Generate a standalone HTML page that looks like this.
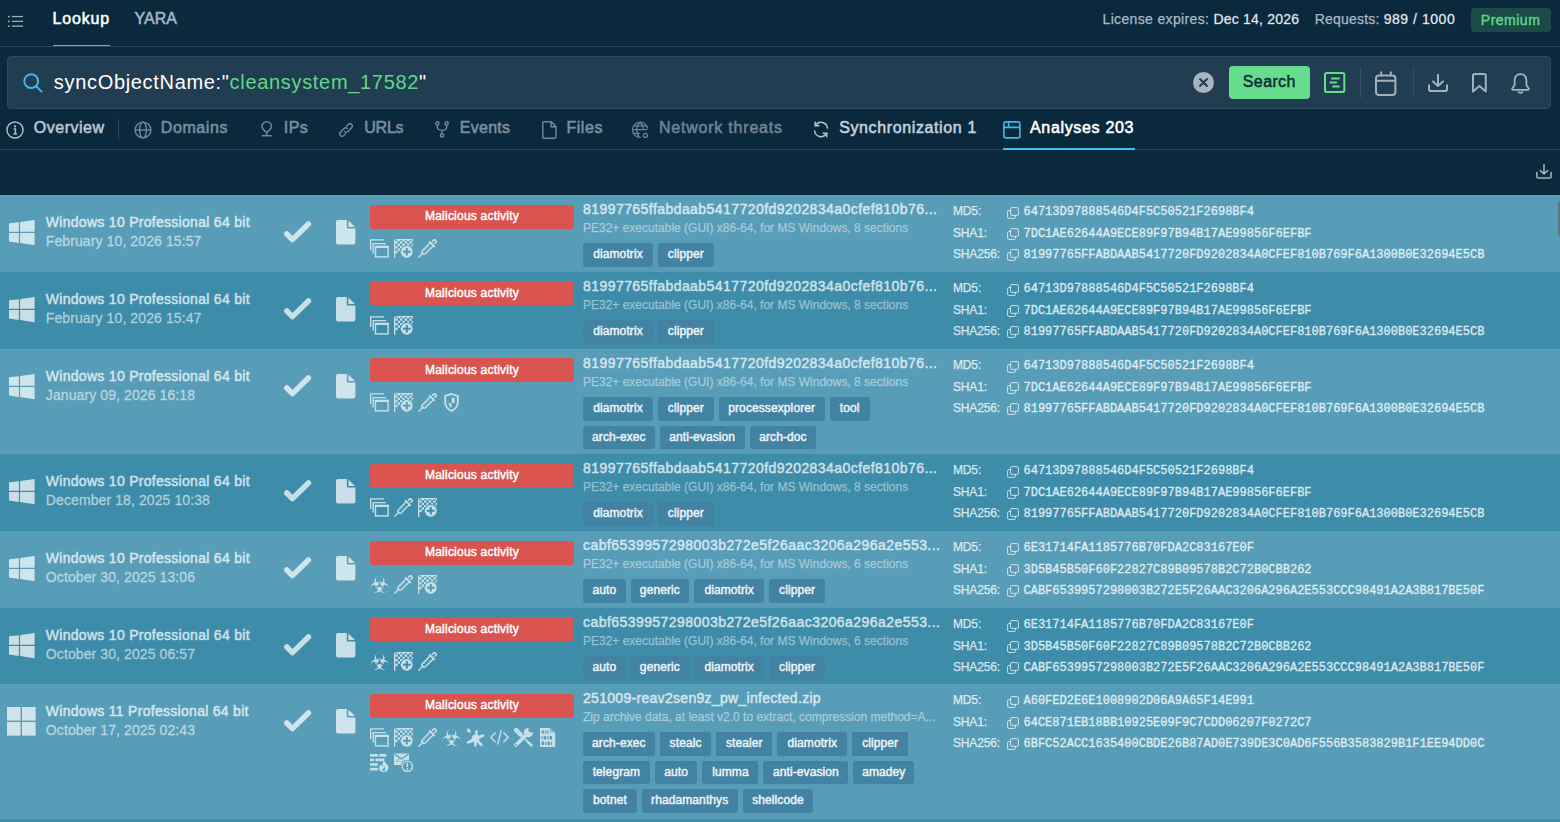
<!DOCTYPE html><html><head><meta charset="utf-8"><style>

*{margin:0;padding:0;box-sizing:border-box}
html,body{width:1560px;height:822px;overflow:hidden;background:#0b293d;font-family:"Liberation Sans",sans-serif}
.abs{position:absolute;display:block}
.t{position:absolute;white-space:nowrap;line-height:1}
.row{position:absolute;left:0;width:1560px}
.rc{position:absolute;left:0;width:1560px;height:0}
.os{position:absolute;left:45.8px;top:19.3px;font-size:14px;line-height:16px;color:var(--c75);-webkit-text-stroke:0.5px var(--c75);white-space:nowrap;letter-spacing:0.29px}
.dt{position:absolute;left:45.8px;top:38.2px;font-size:14px;line-height:16px;color:var(--c55);-webkit-text-stroke:0.3px var(--c55);white-space:nowrap;letter-spacing:0.1px}
.badge{position:absolute;left:370px;top:10.3px;width:204px;height:24px;background:#d9534f;border-radius:3px;color:#fff;-webkit-text-stroke:0.45px #fff;font-size:12px;line-height:23px;text-align:center;letter-spacing:0.22px}
.ic{color:#d2e6ed;opacity:.92}
.nm{position:absolute;left:583px;top:6.4px;font-size:14px;line-height:16px;color:var(--c75);-webkit-text-stroke:0.5px var(--c75);white-space:nowrap;letter-spacing:0.44px}
.ds{position:absolute;left:583px;top:25.8px;font-size:12px;line-height:14px;color:var(--c50);-webkit-text-stroke:0.25px var(--c50);white-space:nowrap}
.tags{position:absolute;left:583px;height:23.5px;display:flex;gap:5px}
.tag{display:block;height:23.5px;background:#4282a3;border-radius:3px;color:#eef4f7;font-weight:normal;-webkit-text-stroke:0.45px #eef4f7;font-size:12px;line-height:23.5px;text-align:center;white-space:nowrap;letter-spacing:0.1px}
.hl{position:absolute;left:953px;font-size:12px;line-height:14px;letter-spacing:-0.15px;color:var(--c80);-webkit-text-stroke:0.25px var(--c80);white-space:nowrap}
.hv{position:absolute;left:1023.5px;font-family:"Liberation Mono",monospace;font-size:12px;line-height:14px;color:var(--c78);white-space:nowrap;-webkit-text-stroke:0.35px var(--c78)}
.cp{color:rgba(255,255,255,.72)}

</style></head><body>
<svg width="0" height="0" style="position:absolute">
<symbol id="i-stack" viewBox="0 0 19 19">
 <path d="M0.6 11V0.9H14" fill="none" stroke="currentColor" stroke-width="1.4"/>
 <path d="M3.2 14.6V4.6H16" fill="none" stroke="currentColor" stroke-width="1.4"/>
 <rect x="5.5" y="7.6" width="12.6" height="10.3" fill="none" stroke="currentColor" stroke-width="1.4"/>
 <rect x="4.8" y="6.8" width="14" height="2.2" fill="currentColor"/>
</symbol>
<symbol id="i-flag" viewBox="0 0 19 19">
 <rect x="0" y="0.5" width="1.3" height="18.5" fill="currentColor"/>
 <path d="M1.3 1.6a1.6 1.6 0 0 1 1.6-1.6H17a1.6 1.6 0 0 1 1.6 1.6V1.2H1.3Z" fill="currentColor"/>
 <g fill="currentColor"><rect x="3.65" y="0.00" width="2.35" height="2.35"/><rect x="8.35" y="0.00" width="2.35" height="2.35"/><rect x="13.05" y="0.00" width="2.35" height="2.35"/><rect x="17.75" y="0.00" width="2.35" height="2.35"/><rect x="1.30" y="2.35" width="2.35" height="2.35"/><rect x="6.00" y="2.35" width="2.35" height="2.35"/><rect x="10.70" y="2.35" width="2.35" height="2.35"/><rect x="15.40" y="2.35" width="2.35" height="2.35"/><rect x="3.65" y="4.70" width="2.35" height="2.35"/><rect x="8.35" y="4.70" width="2.35" height="2.35"/><rect x="13.05" y="4.70" width="2.35" height="2.35"/><rect x="17.75" y="4.70" width="2.35" height="2.35"/><rect x="1.30" y="7.05" width="2.35" height="2.35"/><rect x="6.00" y="7.05" width="2.35" height="2.35"/><rect x="10.70" y="7.05" width="2.35" height="2.35"/><rect x="15.40" y="7.05" width="2.35" height="2.35"/><rect x="3.65" y="9.40" width="2.35" height="2.35"/><rect x="8.35" y="9.40" width="2.35" height="2.35"/><rect x="13.05" y="9.40" width="2.35" height="2.35"/><rect x="17.75" y="9.40" width="2.35" height="2.35"/><rect x="1.30" y="11.75" width="2.35" height="2.35"/><rect x="6.00" y="11.75" width="2.35" height="2.35"/><rect x="10.70" y="11.75" width="2.35" height="2.35"/><rect x="15.40" y="11.75" width="2.35" height="2.35"/></g>
 <circle cx="12.8" cy="12.8" r="6.6" style="fill:var(--rb)"/>
 <circle cx="12.8" cy="12.8" r="5.9" fill="currentColor"/>
 <path d="M12.8 9V16.6M9 12.8H16.6" style="stroke:var(--rb)" stroke-width="2"/>
</symbol>
<symbol id="i-syringe" viewBox="0 0 19 19">
 <path d="M0.8 18.2L5 14" stroke="currentColor" stroke-width="1.3" fill="none" stroke-linecap="round"/>
 <path d="M4.6 11.4L12.6 3.4L15.6 6.4L7.6 14.4Q6 16 4.6 14.6Q3 13 4.6 11.4Z" fill="none" stroke="currentColor" stroke-width="1.4"/>
 <path d="M11 2.2L16.8 8" stroke="currentColor" stroke-width="1.6"/>
 <path d="M14 2.6L16.4 0.4L18.6 2.6L16.4 4.8" fill="none" stroke="currentColor" stroke-width="1.5"/>
 <path d="M6.5 11.2l1 1M8.3 9.4l1 1M10.1 7.6l1 1" stroke="currentColor" stroke-width="1"/>
</symbol>
<symbol id="i-shield" viewBox="0 0 19 19">
 <path d="M9.5 1L15.8 3V9.5Q15.6 15 9.5 18Q3.4 15 3.2 9.5V3Z" fill="none" stroke="currentColor" stroke-width="1.8"/>
 <path d="M9.8 4.8H12.6V10H9.8Z M6.4 10H9.4V15.2Q7 13.2 6.4 10Z" fill="currentColor"/>
</symbol>
<symbol id="i-bio" viewBox="0 0 19 19">
 <mask id="bmask" maskUnits="userSpaceOnUse" x="0" y="0" width="19" height="19"><rect width="19" height="19" fill="white"/><circle cx="9.50" cy="4.70" r="3.75" fill="black"/><circle cx="14.61" cy="13.55" r="3.75" fill="black"/><circle cx="4.39" cy="13.55" r="3.75" fill="black"/><path d="M9.50 10.60L9.50 -1.40" stroke="black" stroke-width="0.7"/><path d="M9.50 10.60L19.89 16.60" stroke="black" stroke-width="0.7"/><path d="M9.50 10.60L-0.89 16.60" stroke="black" stroke-width="0.7"/><circle cx="9.5" cy="10.6" r="1.7" fill="black"/></mask>
 <mask id="bmask2" maskUnits="userSpaceOnUse" x="0" y="0" width="19" height="19"><rect width="19" height="19" fill="white"/><path d="M9.50 10.60L9.50 -1.40" stroke="black" stroke-width="0.7"/><path d="M9.50 10.60L19.89 16.60" stroke="black" stroke-width="0.7"/><path d="M9.50 10.60L-0.89 16.60" stroke="black" stroke-width="0.7"/></mask>
 <g fill="currentColor" mask="url(#bmask)"><circle cx="9.50" cy="6.20" r="5.0"/><circle cx="13.31" cy="12.80" r="5.0"/><circle cx="5.69" cy="12.80" r="5.0"/></g>
 <circle cx="9.5" cy="10.6" r="3.6" fill="none" stroke="currentColor" stroke-width="1.2" mask="url(#bmask2)"/>
</symbol>
<symbol id="i-splat" viewBox="0 0 19 19">
 <g fill="currentColor">
 <path d="M9 10L9.4 2.6Q10.5 1.2 11.6 2.6L11.8 8.6Z"/>
 <path d="M10 8.4L17.4 6.2Q19.2 6.6 18 8.6L12 11.4Z"/>
 <path d="M11.4 10.6L16.6 16.2Q16.8 18.4 14.6 18L9.6 13Z"/>
 <path d="M8 12L8.2 18Q9.2 19.4 10.4 18L11.2 11.4Z"/>
 <path d="M8.4 9.4L1.2 13.4Q-0.2 15.4 1.8 15.8L10 13Z"/>
 <circle cx="9.6" cy="10.4" r="3.8"/>
 <ellipse cx="2.8" cy="2.6" rx="1.4" ry="2.2" transform="rotate(-35 2.8 2.6)"/>
 </g>
</symbol>
<symbol id="i-code" viewBox="0 0 19 19">
 <path d="M5.6 4.6L0.9 9.4L5.6 14.2M13.4 4.6L18.1 9.4L13.4 14.2M11.3 2.2L7.7 16.5" fill="none" stroke="currentColor" stroke-width="1.4"/>
</symbol>
<symbol id="i-tools" viewBox="0 0 19 19">
 <mask id="tmask" maskUnits="userSpaceOnUse" x="-2" y="-2" width="23" height="23"><rect x="-2" y="-2" width="23" height="23" fill="white"/><circle cx="17.2" cy="1.8" r="2.7" fill="black"/></mask>
 <g stroke="currentColor" fill="none">
 <path d="M2.2 2.2L6.8 6.8" stroke-width="4.4" stroke-linecap="round"/>
 <path d="M11.6 11.6L17.6 17.6" stroke-width="1.7" stroke-linecap="round"/>
 <path d="M14.4 14.4L17.2 17.2" stroke-width="2.6" stroke-linecap="round"/>
 <path d="M2 17L11.6 7.4" stroke-width="3.6" stroke-linecap="round"/>
 </g>
 <circle cx="14.4" cy="4.6" r="4.6" fill="currentColor" mask="url(#tmask)"/>
 <circle cx="2.1" cy="16.9" r="0.9" style="fill:var(--rb)"/>
 <path d="M3 1.8L1.8 3M5 2.6L2.6 5M6.6 4L4 6.6" style="stroke:var(--rb)" stroke-width="0.5" opacity="0.6"/>
</symbol>
<symbol id="i-binary" viewBox="0 0 16 19">
 <path d="M0 0H9.8L15.2 5V19H0Z" fill="currentColor"/>
 <path d="M9.9 0.3L14.9 5H9.9Z" style="fill:var(--rb)" opacity="0.45"/>
 <g style="fill:var(--rb)">
 <rect x="1.6" y="2.2" width="2.6" height="3.6" rx="1.2" opacity="0.9"/><rect x="5.3" y="2.2" width="1" height="3.6"/><rect x="7.4" y="2.2" width="1" height="3.6"/>
 <rect x="1.6" y="8" width="1" height="3.6"/><rect x="3.7" y="8" width="2.6" height="3.6" rx="1.2"/><rect x="7.4" y="8" width="1" height="3.6"/><rect x="9.5" y="8" width="2.6" height="3.6" rx="1.2"/>
 <rect x="1.6" y="13.6" width="2.6" height="3.6" rx="1.2"/><rect x="5.3" y="13.6" width="1" height="3.6"/><rect x="7.4" y="13.6" width="2.6" height="3.6" rx="1.2"/><rect x="11.1" y="13.6" width="1" height="3.6"/>
 </g>
</symbol>
<symbol id="i-firewall" viewBox="0 0 19 19">
 <g fill="currentColor">
 <rect x="0" y="1" width="8" height="2.6"/><rect x="9.3" y="1" width="7" height="2.6"/>
 <rect x="0" y="5.6" width="4" height="2.6"/><rect x="5.3" y="5.6" width="9" height="2.6"/>
 <rect x="0" y="10.2" width="8" height="2.6"/>
 <rect x="0" y="14.8" width="8" height="2.6"/>
 <path d="M13.6 8Q18.8 11.5 18.4 15Q18 18.8 13.5 19Q9 18.8 9 15Q9.2 12.4 11.2 11.2Q11.4 13 12.6 13.6Q12.2 10.4 13.6 8Z"/>
 </g>
 <path d="M13.4 18Q11.6 17.4 12 15.4Q12.6 16.4 13.4 16.4Q13.4 14.6 14.4 13.8Q15.8 15.8 14.6 17.8Z" style="fill:var(--rb)"/>
</symbol>
<symbol id="i-mail" viewBox="0 0 19 19">
 <path d="M0 0.5H15V8.5H0Z" fill="currentColor"/>
 <path d="M0.5 1L7.5 6L14.5 1" fill="none" style="stroke:var(--rb)" stroke-width="1.2"/>
 <path d="M0.4 10.8L5.8 5.2" style="stroke:var(--rb)" stroke-width="1"/>
 <path d="M0 8.5H8V12H0Z" fill="currentColor"/>
 <circle cx="13.3" cy="13.3" r="6.6" style="fill:var(--rb)"/>
 <circle cx="13.3" cy="13.3" r="5.2" fill="none" stroke="currentColor" stroke-width="1.3"/>
 <path d="M13.3 9.6V14" stroke="currentColor" stroke-width="1.6"/>
 <circle cx="13.3" cy="16.2" r="0.9" fill="currentColor"/>
</symbol>
<symbol id="i-copy" viewBox="0 0 12 12">
 <rect x="3.6" y="0.6" width="7.8" height="7.8" rx="1.2" fill="none" stroke="currentColor" stroke-width="1"/>
 <path d="M3.6 3.6H1.8Q0.6 3.6 0.6 4.8V10.2Q0.6 11.4 1.8 11.4H7.2Q8.4 11.4 8.4 10.2V8.4" fill="none" stroke="currentColor" stroke-width="1"/>
</symbol>
</svg>

<!-- top bar -->
<svg class="abs" style="left:8px;top:14.5px" width="15" height="13" viewBox="0 0 15 13"><g fill="#9fb0bd"><rect x="0" y="0.8" width="1.6" height="1.6"/><rect x="0" y="5.6" width="1.6" height="1.6"/><rect x="0" y="10.4" width="1.6" height="1.6"/><rect x="4" y="0.9" width="11" height="1.3"/><rect x="4" y="5.7" width="11" height="1.3"/><rect x="4" y="10.5" width="11" height="1.3"/></g></svg>
<div class="t" style="left:52.6px;top:10.5px;font-size:16px;font-weight:normal;-webkit-text-stroke-width:0.55px;letter-spacing:0.8px;color:#fff">Lookup</div>
<div class="t" style="left:134.4px;top:10.5px;font-size:16px;font-weight:normal;-webkit-text-stroke-width:0.55px;letter-spacing:0.05px;color:#a3b6c4">YARA</div>
<div class="abs" style="left:52.6px;top:44.6px;width:57.4px;height:1.4px;background:#3fc0ef"></div>
<div class="abs" style="left:0;top:46px;width:1560px;height:1px;background:#2a475b"></div>
<div class="t" style="left:1102.5px;top:12.2px;font-size:14px;color:#a9bac7;-webkit-text-stroke:0.25px #a9bac7;letter-spacing:0.35px">License expires: <span style="color:#fff;-webkit-text-stroke-width:0.35px;letter-spacing:0.2px">Dec 14, 2026</span></div>
<div class="t" style="left:1314.7px;top:12.2px;font-size:14px;color:#a9bac7;-webkit-text-stroke:0.25px #a9bac7;letter-spacing:0.2px">Requests: <span style="color:#fff;-webkit-text-stroke-width:0.35px;letter-spacing:0.55px">989 / 1000</span></div>
<div class="abs" style="left:1471px;top:8px;width:80px;height:24px;border-radius:4px;background:#1d4a47"></div>
<div class="t" style="left:1480.8px;top:13.2px;font-size:14px;-webkit-text-stroke-width:0.4px;letter-spacing:0.5px;color:#5dd88b">Premium</div>

<!-- search box -->
<div class="abs" style="left:7px;top:56px;width:1544px;height:53px;border:1px solid #2e4b5f;border-radius:4px;background:#213d51"></div>
<svg class="abs" style="left:23px;top:73px" width="20" height="20" viewBox="0 0 20 20"><circle cx="8.2" cy="8.2" r="6.9" fill="none" stroke="#3fb9e6" stroke-width="2"/><path d="M13.2 13.2L18.6 18.6" stroke="#3fb9e6" stroke-width="2" stroke-linecap="round"/></svg>
<div class="t" style="left:53.8px;top:71.5px;font-size:20px;color:#fff;letter-spacing:0.68px">syncObjectName:"<span style="color:#5fd88a">cleansystem_17582</span>"</div>
<svg class="abs" style="left:1193px;top:72px" width="21" height="21" viewBox="0 0 21 21"><circle cx="10.5" cy="10.5" r="10.5" fill="#a8b5be"/><path d="M7 7L14 14M14 7L7 14" stroke="#213d51" stroke-width="2" stroke-linecap="round"/></svg>
<div class="abs" style="left:1229px;top:66px;width:81px;height:33px;border-radius:4px;background:#66dd8c"></div>
<div class="t" style="left:1242.8px;top:74px;font-size:16px;-webkit-text-stroke-width:0.5px;letter-spacing:0.38px;color:#0f2a3b">Search</div>
<svg class="abs" style="left:1324px;top:72px" width="22" height="22" viewBox="0 0 22 22"><rect x="1" y="1" width="19.3" height="19" rx="1.8" fill="none" stroke="#66dd8c" stroke-width="2"/><path d="M7.8 6.4H14.9M6.2 10.5H12.2M9 14.5H14.9" stroke="#66dd8c" stroke-width="2" stroke-linecap="round"/></svg>
<div class="abs" style="left:1360px;top:67px;width:1px;height:31px;background:#34505f"></div>
<svg class="abs" style="left:1375px;top:70.5px" width="23" height="25" viewBox="0 0 23 25"><rect x="1" y="4.5" width="19.4" height="19.5" rx="3" fill="none" stroke="#a3b1bb" stroke-width="2"/><path d="M1 9.8H20.4M6.2 0.6V5.2M15.8 0.6V5.2" stroke="#a3b1bb" stroke-width="2"/></svg>
<div class="abs" style="left:1413px;top:67px;width:1px;height:31px;background:#34505f"></div>
<svg class="abs" style="left:1427.5px;top:73.5px" width="20" height="18" viewBox="0 0 20 18"><path d="M1 11.2V15.2Q1 17 2.8 17H17.2Q19 17 19 15.2V11.2M10 0.8V12M5 7.4L10 12L15 7.4" fill="none" stroke="#a3b1bb" stroke-width="2" stroke-linecap="round" stroke-linejoin="round"/></svg>
<svg class="abs" style="left:1471.5px;top:73px" width="15" height="20" viewBox="0 0 15 20"><path d="M1 18.6V2.6Q1 1 2.6 1H12.2Q13.8 1 13.8 2.6V18.6L7.4 12.9Z" fill="none" stroke="#a3b1bb" stroke-width="2" stroke-linejoin="round"/></svg>
<svg class="abs" style="left:1510.5px;top:72.5px" width="19" height="21" viewBox="0 0 19 21"><path d="M9.5 1.2Q3.6 1.2 3.6 8V12L1.2 15.6Q1 16.8 2.2 16.8H16.8Q18 16.8 17.8 15.6L15.4 12V8Q15.4 1.2 9.5 1.2Z" fill="none" stroke="#a3b1bb" stroke-width="1.8" stroke-linejoin="round"/><path d="M7.6 19.2Q9.5 20.4 11.4 19.2" stroke="#a3b1bb" stroke-width="1.8" fill="none" stroke-linecap="round"/></svg>

<!-- tabs -->
<svg class="abs" style="left:6px;top:120.5px" width="18" height="18" viewBox="0 0 18 18"><circle cx="9" cy="9" r="8" fill="none" stroke="#aebdc8" stroke-width="1.5"/><circle cx="9" cy="5.4" r="1.1" fill="#aebdc8"/><path d="M7.6 8H9.4V12.8M7.4 13H11" fill="none" stroke="#aebdc8" stroke-width="1.5"/></svg>
<div class="t" style="left:33.8px;top:119.6px;font-size:16px;font-weight:normal;-webkit-text-stroke-width:0.55px;color:#b9c9d5;letter-spacing:0.5px">Overview</div>
<div class="abs" style="left:118px;top:118.5px;width:1px;height:20px;background:#2f4b5e"></div>
<svg class="abs" style="left:133.5px;top:120.5px" width="18" height="18" viewBox="0 0 18 18"><g fill="none" stroke="#74899a" stroke-width="1.4"><circle cx="9" cy="9" r="7.9"/><ellipse cx="9" cy="9" rx="3.4" ry="7.9"/><path d="M1 9H17"/></g></svg>
<div class="t" style="left:160.8px;top:119.6px;font-size:16px;font-weight:normal;-webkit-text-stroke-width:0.55px;color:#7a8fa0;letter-spacing:0.58px">Domains</div>
<svg class="abs" style="left:259.5px;top:120px" width="14" height="18" viewBox="0 0 14 18"><g fill="none" stroke="#74899a" stroke-width="1.5"><path d="M6.7 1.8A4.8 4.8 0 0 1 11.5 6.6Q11.5 8.8 6.7 12.6Q1.9 8.8 1.9 6.6A4.8 4.8 0 0 1 6.7 1.8Z"/><path d="M6.7 12.6V15.6M1.6 15.8H11.8"/></g></svg>
<div class="t" style="left:283.8px;top:119.6px;font-size:16px;font-weight:normal;-webkit-text-stroke-width:0.55px;color:#7a8fa0;letter-spacing:0.43px">IPs</div>
<svg class="abs" style="left:338px;top:121.5px" width="16" height="16" viewBox="0 0 16 16"><g fill="none" stroke="#74899a" stroke-width="1.4" stroke-linecap="round"><path d="M6.6 9.4Q8.2 11 10 9.4L13.6 5.8Q15.2 4 13.6 2.4Q12 0.8 10.2 2.4L8.6 4"/><path d="M9.4 6.6Q7.8 5 6 6.6L2.4 10.2Q0.8 12 2.4 13.6Q4 15.2 5.8 13.6L7.4 12"/></g></svg>
<div class="t" style="left:364.2px;top:119.6px;font-size:16px;font-weight:normal;-webkit-text-stroke-width:0.55px;color:#7a8fa0;letter-spacing:-0.2px">URLs</div>
<svg class="abs" style="left:434.5px;top:121px" width="14" height="17" viewBox="0 0 14 17"><g fill="none" stroke="#74899a" stroke-width="1.4"><circle cx="2.4" cy="2.4" r="1.6"/><circle cx="11.6" cy="2.4" r="1.6"/><circle cx="7" cy="14.4" r="1.6"/><path d="M2.4 4V6.4Q2.4 8.6 7 9.4Q11.6 8.6 11.6 6.4V4M7 9.4V12.8"/></g></svg>
<div class="t" style="left:459.7px;top:119.6px;font-size:16px;font-weight:normal;-webkit-text-stroke-width:0.55px;color:#7a8fa0;letter-spacing:0.3px">Events</div>
<svg class="abs" style="left:541.5px;top:120.5px" width="15" height="18" viewBox="0 0 15 18"><path d="M2 0.8H9.4L14 5.4V15.8Q14 17.2 12.6 17.2H2Q0.8 17.2 0.8 15.8V2Q0.8 0.8 2 0.8Z M9 1V5.8H13.8" fill="none" stroke="#74899a" stroke-width="1.4" stroke-linejoin="round"/></svg>
<div class="t" style="left:566.4px;top:119.6px;font-size:16px;font-weight:normal;-webkit-text-stroke-width:0.55px;color:#7a8fa0;letter-spacing:0.56px">Files</div>
<svg class="abs" style="left:632px;top:120.5px" width="17" height="18" viewBox="0 0 17 18"><g fill="none" stroke="#6b8193" stroke-width="1.3"><path d="M15.6 7.6A7.6 7.6 0 1 0 8.6 16.4"/><path d="M8 1Q4.6 4.6 4.6 8.6Q4.6 12.6 7.2 16"/><path d="M8 1Q11.4 4.6 11.4 8"/><path d="M1 8.6H15.4M2 4.8H14M2.2 12.4H8"/><circle cx="13.4" cy="14.4" r="2"/></g></svg>
<div class="t" style="left:659px;top:119.6px;font-size:16px;font-weight:normal;-webkit-text-stroke-width:0.55px;color:#6d8495;letter-spacing:0.78px">Network threats</div>
<svg class="abs" style="left:813px;top:121px" width="16" height="17" viewBox="0 0 16 17"><g fill="none" stroke="#b3c3cf" stroke-width="1.5" stroke-linecap="round"><path d="M14.4 7A6.4 6.4 0 0 0 2.6 4.4M1.6 10A6.4 6.4 0 0 0 13.4 12.6"/><path d="M2.2 1.2V4.8H5.8M13.8 15.8V12.2H10.2"/></g></svg>
<div class="t" style="left:839.2px;top:119.6px;font-size:16px;font-weight:normal;-webkit-text-stroke-width:0.55px;color:#c1d1dc;letter-spacing:0.62px">Synchronization 1</div>
<svg class="abs" style="left:1002.5px;top:120.5px" width="18" height="18" viewBox="0 0 18 18"><g fill="none" stroke="#3fb9e6" stroke-width="1.6"><rect x="0.9" y="0.9" width="16" height="16" rx="1.8"/><path d="M0.9 6.4H16.9M5.6 0.9V6.4"/></g></svg>
<div class="t" style="left:1030px;top:119.6px;font-size:16px;font-weight:normal;-webkit-text-stroke-width:0.55px;color:#fff;letter-spacing:0.67px">Analyses 203</div>
<div class="abs" style="left:0;top:149px;width:1560px;height:1px;background:#2a475b"></div>
<div class="abs" style="left:1002.8px;top:148px;width:132.2px;height:2px;background:#3fc0ef"></div>
<svg class="abs" style="left:1535.5px;top:163.5px" width="16" height="15" viewBox="0 0 16 15"><path d="M0.9 8.6V12.6Q0.9 14 2.3 14H13.7Q15.1 14 15.1 12.6V8.6M8 0.8V10M4.4 6.6L8 10L11.6 6.6" fill="none" stroke="#a3b1bb" stroke-width="1.6" stroke-linecap="round" stroke-linejoin="round"/></svg>

<div class="row" style="top:195px;height:77px;background:#589db8"></div>
<div class="rc" style="top:195px;--rb:#589db8;--c55:rgb(185,214,225);--c50:rgb(166,203,217);--c80:rgb(222,235,241);--c75:rgb(212,230,237);--c78:rgb(222,235,241)">
<svg class="abs" style="left:8.5px;top:24.7px" width="26" height="26" viewBox="0 0 26 26"><g fill="rgba(255,255,255,.72)"><path d="M0 3.3L9.9 2.2V11.8H0Z"/><path d="M11.1 2.1L25.6 0V11.8H11.1Z"/><path d="M0 13H9.9V22.9L0 21.6Z"/><path d="M11.1 13H25.6V25.2L11.1 23.1Z"/></g></svg>
<div class="os">Windows 10 Professional 64 bit</div><div class="dt">February 10, 2026 15:57</div>
<svg class="abs" style="left:283px;top:25.6px" width="29" height="24" viewBox="0 0 29 24"><path d="M3.8 13L9.4 18.6L25.4 3" fill="none" stroke="rgba(255,255,255,.72)" stroke-width="5.5" stroke-linecap="round" stroke-linejoin="round"/></svg>
<svg class="abs" style="left:335.5px;top:25px" width="20" height="25" viewBox="0 0 20 25"><path d="M2 0H10.8V7.2Q10.8 8.6 12.2 8.6H19.4V22.4Q19.4 24.4 17.4 24.4H2Q0 24.4 0 22.4V2Q0 0 2 0Z M12.4 0.4L19 7H12.4Z" fill="rgba(255,255,255,.72)"/></svg>
<div class="badge" style="top:10.00px;padding-top:0px">Malicious activity</div>
<svg class="abs ic" style="left:370.00px;top:44.3px" width="19" height="19"><use href="#i-stack"/></svg>
<svg class="abs ic" style="left:393.95px;top:44.3px" width="19" height="19"><use href="#i-flag"/></svg>
<svg class="abs ic" style="left:417.90px;top:44.3px" width="19" height="19"><use href="#i-syringe"/></svg>
<div class="nm">81997765ffabdaab5417720fd9202834a0cfef810b76...</div><div class="ds">PE32+ executable (GUI) x86-64, for MS Windows, 8 sections</div>
<div class="tags" style="top:48.1px">
<span class="tag" style="width:70px">diamotrix</span>
<span class="tag" style="width:55.8px">clipper</span>
</div>
<div class="hl" style="top:8.90px">MD5:</div>
<svg class="abs cp" style="left:1007px;top:11.50px" width="12" height="12"><use href="#i-copy"/></svg>
<div class="hv" style="top:10.00px">64713D97888546D4F5C50521F2698BF4</div>
<div class="hl" style="top:30.60px">SHA1:</div>
<svg class="abs cp" style="left:1007px;top:33.20px" width="12" height="12"><use href="#i-copy"/></svg>
<div class="hv" style="top:31.70px">7DC1AE62644A9ECE89F97B94B17AE99856F6EFBF</div>
<div class="hl" style="top:51.60px">SHA256:</div>
<svg class="abs cp" style="left:1007px;top:54.20px" width="12" height="12"><use href="#i-copy"/></svg>
<div class="hv" style="top:52.70px">81997765FFABDAAB5417720FD9202834A0CFEF810B769F6A1300B0E32694E5CB</div>
</div>
<div class="row" style="top:272px;height:77px;background:#3d8caa"></div>
<div class="rc" style="top:272px;--rb:#3d8caa;--c55:rgb(174,207,219);--c50:rgb(152,194,210);--c80:rgb(216,232,238);--c75:rgb(205,225,233);--c78:rgb(216,232,238)">
<svg class="abs" style="left:8.5px;top:24.7px" width="26" height="26" viewBox="0 0 26 26"><g fill="rgba(255,255,255,.72)"><path d="M0 3.3L9.9 2.2V11.8H0Z"/><path d="M11.1 2.1L25.6 0V11.8H11.1Z"/><path d="M0 13H9.9V22.9L0 21.6Z"/><path d="M11.1 13H25.6V25.2L11.1 23.1Z"/></g></svg>
<div class="os">Windows 10 Professional 64 bit</div><div class="dt">February 10, 2026 15:47</div>
<svg class="abs" style="left:283px;top:25.6px" width="29" height="24" viewBox="0 0 29 24"><path d="M3.8 13L9.4 18.6L25.4 3" fill="none" stroke="rgba(255,255,255,.72)" stroke-width="5.5" stroke-linecap="round" stroke-linejoin="round"/></svg>
<svg class="abs" style="left:335.5px;top:25px" width="20" height="25" viewBox="0 0 20 25"><path d="M2 0H10.8V7.2Q10.8 8.6 12.2 8.6H19.4V22.4Q19.4 24.4 17.4 24.4H2Q0 24.4 0 22.4V2Q0 0 2 0Z M12.4 0.4L19 7H12.4Z" fill="rgba(255,255,255,.72)"/></svg>
<div class="badge" style="top:9.00px;padding-top:1px">Malicious activity</div>
<svg class="abs ic" style="left:370.00px;top:44.3px" width="19" height="19"><use href="#i-stack"/></svg>
<svg class="abs ic" style="left:393.95px;top:44.3px" width="19" height="19"><use href="#i-flag"/></svg>
<div class="nm">81997765ffabdaab5417720fd9202834a0cfef810b76...</div><div class="ds">PE32+ executable (GUI) x86-64, for MS Windows, 8 sections</div>
<div class="tags" style="top:48.1px">
<span class="tag" style="width:70px">diamotrix</span>
<span class="tag" style="width:55.8px">clipper</span>
</div>
<div class="hl" style="top:8.90px">MD5:</div>
<svg class="abs cp" style="left:1007px;top:11.50px" width="12" height="12"><use href="#i-copy"/></svg>
<div class="hv" style="top:10.00px">64713D97888546D4F5C50521F2698BF4</div>
<div class="hl" style="top:30.60px">SHA1:</div>
<svg class="abs cp" style="left:1007px;top:33.20px" width="12" height="12"><use href="#i-copy"/></svg>
<div class="hv" style="top:31.70px">7DC1AE62644A9ECE89F97B94B17AE99856F6EFBF</div>
<div class="hl" style="top:51.60px">SHA256:</div>
<svg class="abs cp" style="left:1007px;top:54.20px" width="12" height="12"><use href="#i-copy"/></svg>
<div class="hv" style="top:52.70px">81997765FFABDAAB5417720FD9202834A0CFEF810B769F6A1300B0E32694E5CB</div>
</div>
<div class="row" style="top:349px;height:105px;background:#589db8"></div>
<div class="rc" style="top:349px;--rb:#589db8;--c55:rgb(185,214,225);--c50:rgb(166,203,217);--c80:rgb(222,235,241);--c75:rgb(212,230,237);--c78:rgb(222,235,241)">
<svg class="abs" style="left:8.5px;top:24.7px" width="26" height="26" viewBox="0 0 26 26"><g fill="rgba(255,255,255,.72)"><path d="M0 3.3L9.9 2.2V11.8H0Z"/><path d="M11.1 2.1L25.6 0V11.8H11.1Z"/><path d="M0 13H9.9V22.9L0 21.6Z"/><path d="M11.1 13H25.6V25.2L11.1 23.1Z"/></g></svg>
<div class="os">Windows 10 Professional 64 bit</div><div class="dt">January 09, 2026 16:18</div>
<svg class="abs" style="left:283px;top:25.6px" width="29" height="24" viewBox="0 0 29 24"><path d="M3.8 13L9.4 18.6L25.4 3" fill="none" stroke="rgba(255,255,255,.72)" stroke-width="5.5" stroke-linecap="round" stroke-linejoin="round"/></svg>
<svg class="abs" style="left:335.5px;top:25px" width="20" height="25" viewBox="0 0 20 25"><path d="M2 0H10.8V7.2Q10.8 8.6 12.2 8.6H19.4V22.4Q19.4 24.4 17.4 24.4H2Q0 24.4 0 22.4V2Q0 0 2 0Z M12.4 0.4L19 7H12.4Z" fill="rgba(255,255,255,.72)"/></svg>
<div class="badge" style="top:9.00px;padding-top:1px">Malicious activity</div>
<svg class="abs ic" style="left:370.00px;top:44.3px" width="19" height="19"><use href="#i-stack"/></svg>
<svg class="abs ic" style="left:393.95px;top:44.3px" width="19" height="19"><use href="#i-flag"/></svg>
<svg class="abs ic" style="left:417.90px;top:44.3px" width="19" height="19"><use href="#i-syringe"/></svg>
<svg class="abs ic" style="left:441.85px;top:44.3px" width="19" height="19"><use href="#i-shield"/></svg>
<div class="nm">81997765ffabdaab5417720fd9202834a0cfef810b76...</div><div class="ds">PE32+ executable (GUI) x86-64, for MS Windows, 8 sections</div>
<div class="tags" style="top:48.1px">
<span class="tag" style="width:70px">diamotrix</span>
<span class="tag" style="width:55.8px">clipper</span>
<span class="tag" style="width:105.8px">processexplorer</span>
<span class="tag" style="width:40px">tool</span>
</div>
<div class="tags" style="top:76.7px">
<span class="tag" style="width:71.8px">arch-exec</span>
<span class="tag" style="width:84.8px">anti-evasion</span>
<span class="tag" style="width:66.8px">arch-doc</span>
</div>
<div class="hl" style="top:8.90px">MD5:</div>
<svg class="abs cp" style="left:1007px;top:11.50px" width="12" height="12"><use href="#i-copy"/></svg>
<div class="hv" style="top:10.00px">64713D97888546D4F5C50521F2698BF4</div>
<div class="hl" style="top:30.60px">SHA1:</div>
<svg class="abs cp" style="left:1007px;top:33.20px" width="12" height="12"><use href="#i-copy"/></svg>
<div class="hv" style="top:31.70px">7DC1AE62644A9ECE89F97B94B17AE99856F6EFBF</div>
<div class="hl" style="top:51.60px">SHA256:</div>
<svg class="abs cp" style="left:1007px;top:54.20px" width="12" height="12"><use href="#i-copy"/></svg>
<div class="hv" style="top:52.70px">81997765FFABDAAB5417720FD9202834A0CFEF810B769F6A1300B0E32694E5CB</div>
</div>
<div class="row" style="top:454px;height:77px;background:#3d8caa"></div>
<div class="rc" style="top:454px;--rb:#3d8caa;--c55:rgb(174,207,219);--c50:rgb(152,194,210);--c80:rgb(216,232,238);--c75:rgb(205,225,233);--c78:rgb(216,232,238)">
<svg class="abs" style="left:8.5px;top:24.7px" width="26" height="26" viewBox="0 0 26 26"><g fill="rgba(255,255,255,.72)"><path d="M0 3.3L9.9 2.2V11.8H0Z"/><path d="M11.1 2.1L25.6 0V11.8H11.1Z"/><path d="M0 13H9.9V22.9L0 21.6Z"/><path d="M11.1 13H25.6V25.2L11.1 23.1Z"/></g></svg>
<div class="os">Windows 10 Professional 64 bit</div><div class="dt">December 18, 2025 10:38</div>
<svg class="abs" style="left:283px;top:25.6px" width="29" height="24" viewBox="0 0 29 24"><path d="M3.8 13L9.4 18.6L25.4 3" fill="none" stroke="rgba(255,255,255,.72)" stroke-width="5.5" stroke-linecap="round" stroke-linejoin="round"/></svg>
<svg class="abs" style="left:335.5px;top:25px" width="20" height="25" viewBox="0 0 20 25"><path d="M2 0H10.8V7.2Q10.8 8.6 12.2 8.6H19.4V22.4Q19.4 24.4 17.4 24.4H2Q0 24.4 0 22.4V2Q0 0 2 0Z M12.4 0.4L19 7H12.4Z" fill="rgba(255,255,255,.72)"/></svg>
<div class="badge" style="top:10.00px;padding-top:0px">Malicious activity</div>
<svg class="abs ic" style="left:370.00px;top:44.3px" width="19" height="19"><use href="#i-stack"/></svg>
<svg class="abs ic" style="left:393.95px;top:44.3px" width="19" height="19"><use href="#i-syringe"/></svg>
<svg class="abs ic" style="left:417.90px;top:44.3px" width="19" height="19"><use href="#i-flag"/></svg>
<div class="nm">81997765ffabdaab5417720fd9202834a0cfef810b76...</div><div class="ds">PE32+ executable (GUI) x86-64, for MS Windows, 8 sections</div>
<div class="tags" style="top:48.1px">
<span class="tag" style="width:70px">diamotrix</span>
<span class="tag" style="width:55.8px">clipper</span>
</div>
<div class="hl" style="top:8.90px">MD5:</div>
<svg class="abs cp" style="left:1007px;top:11.50px" width="12" height="12"><use href="#i-copy"/></svg>
<div class="hv" style="top:10.00px">64713D97888546D4F5C50521F2698BF4</div>
<div class="hl" style="top:30.60px">SHA1:</div>
<svg class="abs cp" style="left:1007px;top:33.20px" width="12" height="12"><use href="#i-copy"/></svg>
<div class="hv" style="top:31.70px">7DC1AE62644A9ECE89F97B94B17AE99856F6EFBF</div>
<div class="hl" style="top:51.60px">SHA256:</div>
<svg class="abs cp" style="left:1007px;top:54.20px" width="12" height="12"><use href="#i-copy"/></svg>
<div class="hv" style="top:52.70px">81997765FFABDAAB5417720FD9202834A0CFEF810B769F6A1300B0E32694E5CB</div>
</div>
<div class="row" style="top:531px;height:77px;background:#589db8"></div>
<div class="rc" style="top:531px;--rb:#589db8;--c55:rgb(185,214,225);--c50:rgb(166,203,217);--c80:rgb(222,235,241);--c75:rgb(212,230,237);--c78:rgb(222,235,241)">
<svg class="abs" style="left:8.5px;top:24.7px" width="26" height="26" viewBox="0 0 26 26"><g fill="rgba(255,255,255,.72)"><path d="M0 3.3L9.9 2.2V11.8H0Z"/><path d="M11.1 2.1L25.6 0V11.8H11.1Z"/><path d="M0 13H9.9V22.9L0 21.6Z"/><path d="M11.1 13H25.6V25.2L11.1 23.1Z"/></g></svg>
<div class="os">Windows 10 Professional 64 bit</div><div class="dt">October 30, 2025 13:06</div>
<svg class="abs" style="left:283px;top:25.6px" width="29" height="24" viewBox="0 0 29 24"><path d="M3.8 13L9.4 18.6L25.4 3" fill="none" stroke="rgba(255,255,255,.72)" stroke-width="5.5" stroke-linecap="round" stroke-linejoin="round"/></svg>
<svg class="abs" style="left:335.5px;top:25px" width="20" height="25" viewBox="0 0 20 25"><path d="M2 0H10.8V7.2Q10.8 8.6 12.2 8.6H19.4V22.4Q19.4 24.4 17.4 24.4H2Q0 24.4 0 22.4V2Q0 0 2 0Z M12.4 0.4L19 7H12.4Z" fill="rgba(255,255,255,.72)"/></svg>
<div class="badge" style="top:10.00px;padding-top:0px">Malicious activity</div>
<svg class="abs ic" style="left:370.00px;top:44.3px" width="19" height="19"><use href="#i-bio"/></svg>
<svg class="abs ic" style="left:393.95px;top:44.3px" width="19" height="19"><use href="#i-syringe"/></svg>
<svg class="abs ic" style="left:417.90px;top:44.3px" width="19" height="19"><use href="#i-flag"/></svg>
<div class="nm">cabf6539957298003b272e5f26aac3206a296a2e553...</div><div class="ds">PE32+ executable (GUI) x86-64, for MS Windows, 6 sections</div>
<div class="tags" style="top:48.1px">
<span class="tag" style="width:42.6px">auto</span>
<span class="tag" style="width:58.6px">generic</span>
<span class="tag" style="width:70px">diamotrix</span>
<span class="tag" style="width:55.8px">clipper</span>
</div>
<div class="hl" style="top:8.90px">MD5:</div>
<svg class="abs cp" style="left:1007px;top:11.50px" width="12" height="12"><use href="#i-copy"/></svg>
<div class="hv" style="top:10.00px">6E31714FA1185776B70FDA2C83167E0F</div>
<div class="hl" style="top:30.60px">SHA1:</div>
<svg class="abs cp" style="left:1007px;top:33.20px" width="12" height="12"><use href="#i-copy"/></svg>
<div class="hv" style="top:31.70px">3D5B45B50F60F22827C89B09578B2C72B0CBB262</div>
<div class="hl" style="top:51.60px">SHA256:</div>
<svg class="abs cp" style="left:1007px;top:54.20px" width="12" height="12"><use href="#i-copy"/></svg>
<div class="hv" style="top:52.70px">CABF6539957298003B272E5F26AAC3206A296A2E553CCC98491A2A3B817BE50F</div>
</div>
<div class="row" style="top:608px;height:76px;background:#3d8caa"></div>
<div class="rc" style="top:608px;--rb:#3d8caa;--c55:rgb(174,207,219);--c50:rgb(152,194,210);--c80:rgb(216,232,238);--c75:rgb(205,225,233);--c78:rgb(216,232,238)">
<svg class="abs" style="left:8.5px;top:24.7px" width="26" height="26" viewBox="0 0 26 26"><g fill="rgba(255,255,255,.72)"><path d="M0 3.3L9.9 2.2V11.8H0Z"/><path d="M11.1 2.1L25.6 0V11.8H11.1Z"/><path d="M0 13H9.9V22.9L0 21.6Z"/><path d="M11.1 13H25.6V25.2L11.1 23.1Z"/></g></svg>
<div class="os">Windows 10 Professional 64 bit</div><div class="dt">October 30, 2025 06:57</div>
<svg class="abs" style="left:283px;top:25.6px" width="29" height="24" viewBox="0 0 29 24"><path d="M3.8 13L9.4 18.6L25.4 3" fill="none" stroke="rgba(255,255,255,.72)" stroke-width="5.5" stroke-linecap="round" stroke-linejoin="round"/></svg>
<svg class="abs" style="left:335.5px;top:25px" width="20" height="25" viewBox="0 0 20 25"><path d="M2 0H10.8V7.2Q10.8 8.6 12.2 8.6H19.4V22.4Q19.4 24.4 17.4 24.4H2Q0 24.4 0 22.4V2Q0 0 2 0Z M12.4 0.4L19 7H12.4Z" fill="rgba(255,255,255,.72)"/></svg>
<div class="badge" style="top:9.00px;padding-top:1px">Malicious activity</div>
<svg class="abs ic" style="left:370.00px;top:44.3px" width="19" height="19"><use href="#i-bio"/></svg>
<svg class="abs ic" style="left:393.95px;top:44.3px" width="19" height="19"><use href="#i-flag"/></svg>
<svg class="abs ic" style="left:417.90px;top:44.3px" width="19" height="19"><use href="#i-syringe"/></svg>
<div class="nm">cabf6539957298003b272e5f26aac3206a296a2e553...</div><div class="ds">PE32+ executable (GUI) x86-64, for MS Windows, 6 sections</div>
<div class="tags" style="top:48.1px">
<span class="tag" style="width:42.6px">auto</span>
<span class="tag" style="width:58.6px">generic</span>
<span class="tag" style="width:70px">diamotrix</span>
<span class="tag" style="width:55.8px">clipper</span>
</div>
<div class="hl" style="top:8.90px">MD5:</div>
<svg class="abs cp" style="left:1007px;top:11.50px" width="12" height="12"><use href="#i-copy"/></svg>
<div class="hv" style="top:10.00px">6E31714FA1185776B70FDA2C83167E0F</div>
<div class="hl" style="top:30.60px">SHA1:</div>
<svg class="abs cp" style="left:1007px;top:33.20px" width="12" height="12"><use href="#i-copy"/></svg>
<div class="hv" style="top:31.70px">3D5B45B50F60F22827C89B09578B2C72B0CBB262</div>
<div class="hl" style="top:51.60px">SHA256:</div>
<svg class="abs cp" style="left:1007px;top:54.20px" width="12" height="12"><use href="#i-copy"/></svg>
<div class="hv" style="top:52.70px">CABF6539957298003B272E5F26AAC3206A296A2E553CCC98491A2A3B817BE50F</div>
</div>
<div class="row" style="top:684px;height:135px;background:#589db8"></div>
<div class="rc" style="top:684px;--rb:#589db8;--c55:rgb(185,214,225);--c50:rgb(166,203,217);--c80:rgb(222,235,241);--c75:rgb(212,230,237);--c78:rgb(222,235,241)">
<svg class="abs" style="left:7px;top:23px" width="29" height="29" viewBox="0 0 29 29"><g fill="currentColor" style="color:rgba(255,255,255,.72)"><rect x="0" y="0" width="13.6" height="13.6"/><rect x="15" y="0" width="13.6" height="13.6"/><rect x="0" y="15" width="13.6" height="13.6"/><rect x="15" y="15" width="13.6" height="13.6"/></g></svg>
<div class="os">Windows 11 Professional 64 bit</div><div class="dt">October 17, 2025 02:43</div>
<svg class="abs" style="left:283px;top:25.6px" width="29" height="24" viewBox="0 0 29 24"><path d="M3.8 13L9.4 18.6L25.4 3" fill="none" stroke="rgba(255,255,255,.72)" stroke-width="5.5" stroke-linecap="round" stroke-linejoin="round"/></svg>
<svg class="abs" style="left:335.5px;top:25px" width="20" height="25" viewBox="0 0 20 25"><path d="M2 0H10.8V7.2Q10.8 8.6 12.2 8.6H19.4V22.4Q19.4 24.4 17.4 24.4H2Q0 24.4 0 22.4V2Q0 0 2 0Z M12.4 0.4L19 7H12.4Z" fill="rgba(255,255,255,.72)"/></svg>
<div class="badge" style="top:10.00px;padding-top:0px">Malicious activity</div>
<svg class="abs ic" style="left:370.00px;top:44.3px" width="19" height="19"><use href="#i-stack"/></svg>
<svg class="abs ic" style="left:393.95px;top:44.3px" width="19" height="19"><use href="#i-flag"/></svg>
<svg class="abs ic" style="left:417.90px;top:44.3px" width="19" height="19"><use href="#i-syringe"/></svg>
<svg class="abs ic" style="left:441.85px;top:44.3px" width="19" height="19"><use href="#i-bio"/></svg>
<svg class="abs ic" style="left:465.80px;top:44.3px" width="19" height="19"><use href="#i-splat"/></svg>
<svg class="abs ic" style="left:489.75px;top:44.3px" width="19" height="19"><use href="#i-code"/></svg>
<svg class="abs ic" style="left:513.70px;top:44.3px" width="19" height="19"><use href="#i-tools"/></svg>
<svg class="abs ic" style="left:539.75px;top:44.3px" width="16" height="19"><use href="#i-binary"/></svg>
<svg class="abs ic" style="left:370.00px;top:69.3px" width="19" height="19"><use href="#i-firewall"/></svg>
<svg class="abs ic" style="left:393.95px;top:69.3px" width="19" height="19"><use href="#i-mail"/></svg>
<div class="nm" style="letter-spacing:0.3px">251009-reav2sen9z_pw_infected.zip</div><div class="ds">Zip archive data, at least v2.0 to extract, compression method=A...</div>
<div class="tags" style="top:48.1px">
<span class="tag" style="width:71.8px">arch-exec</span>
<span class="tag" style="width:51.6px">stealc</span>
<span class="tag" style="width:55.9px">stealer</span>
<span class="tag" style="width:70px">diamotrix</span>
<span class="tag" style="width:55.8px">clipper</span>
</div>
<div class="tags" style="top:76.7px">
<span class="tag" style="width:66.8px">telegram</span>
<span class="tag" style="width:42.6px">auto</span>
<span class="tag" style="width:56.1px">lumma</span>
<span class="tag" style="width:84.8px">anti-evasion</span>
<span class="tag" style="width:61px">amadey</span>
</div>
<div class="tags" style="top:105.3px">
<span class="tag" style="width:53.8px">botnet</span>
<span class="tag" style="width:95.8px">rhadamanthys</span>
<span class="tag" style="width:70.7px">shellcode</span>
</div>
<div class="hl" style="top:8.90px">MD5:</div>
<svg class="abs cp" style="left:1007px;top:11.50px" width="12" height="12"><use href="#i-copy"/></svg>
<div class="hv" style="top:10.00px">A60FED2E6E1008902D06A9A65F14E991</div>
<div class="hl" style="top:30.60px">SHA1:</div>
<svg class="abs cp" style="left:1007px;top:33.20px" width="12" height="12"><use href="#i-copy"/></svg>
<div class="hv" style="top:31.70px">64CE871EB18BB10925E09F9C7CDD06207F0272C7</div>
<div class="hl" style="top:51.60px">SHA256:</div>
<svg class="abs cp" style="left:1007px;top:54.20px" width="12" height="12"><use href="#i-copy"/></svg>
<div class="hv" style="top:52.70px">6BFC52ACC1635400CBDE26B87AD0E739DE3C0AD6F556B3583829B1F1EE94DD0C</div>
</div>
<div class="row" style="top:819px;height:3px;background:#3d8caa"></div>
<div class="abs" style="left:1557.5px;top:201px;width:3px;height:35px;border-radius:1.5px;background:#5e7786"></div>
</body></html>
